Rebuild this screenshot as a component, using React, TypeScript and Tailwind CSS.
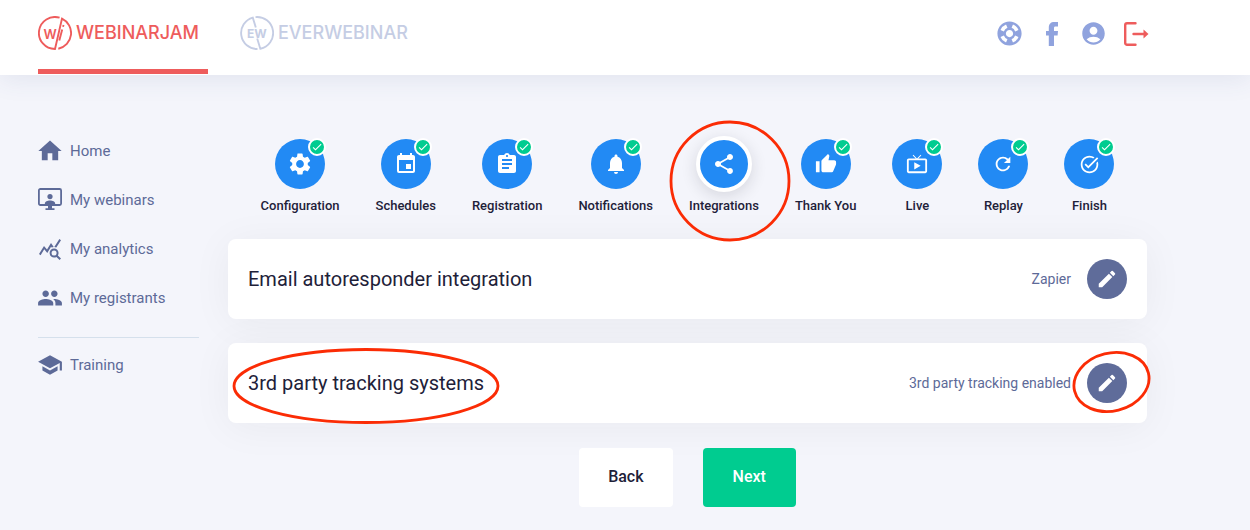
import type { ReactNode } from "react";
import type { IconType } from "react-icons";
import {
  MdAccountCircle,
  MdAssignment,
  MdCheck,
  MdEdit,
  MdEvent,
  MdHome,
  MdLiveTv,
  MdNotifications,
  MdPeople,
  MdQueryStats,
  MdRefresh,
  MdSchool,
  MdSettings,
  MdShare,
  MdSupport,
  MdTaskAlt,
  MdThumbUp,
} from "react-icons/md";

function WebinarJamMark() {
  return (
    <svg viewBox="0 0 34 34" className="size-[34px] shrink-0" fill="none" stroke="currentColor" strokeWidth="1.9" aria-hidden="true">
      <path d="M21.6 1.7A16 16 0 1 0 17 33L24 2.600A16 16 0 0 1 20.300 32.700" />
      <path d="M24.200 13.500L21.300 24.500M25 10.800L25.600 9" />
      <text x="5.500" y="22.500" fontSize="13" fontWeight="600" fontFamily="Inter, sans-serif" fill="currentColor" stroke="none">
        W
      </text>
    </svg>
  );
}

function EverWebinarMark() {
  return (
    <svg viewBox="0 0 34 34" className="size-[34px] shrink-0" fill="none" stroke="currentColor" strokeWidth="1.9" aria-hidden="true">
      <path d="M15.500 1.100A16 16 0 0 1 20.300 32.700L17.200 22.500" />
      <path d="M17.500 33A16 16 0 0 1 12.800 1.600L15.800 11.500" />
      <text x="7" y="21.500" fontSize="12" fontWeight="700" fontFamily="Inter, sans-serif" fill="currentColor" stroke="none">
        EW
      </text>
    </svg>
  );
}

function FacebookIcon() {
  return (
    <svg viewBox="0 0 12 24" className="h-6 w-3" fill="currentColor" aria-hidden="true">
      <path d="M12 0v4.500H9.600C8.300 4.500 8 5.100 8 6.200V9h4l-.4 4.500H8V24H2.800V13.500H0V9h2.800V5.800C2.800 2 4.800 0 8.300 0z" />
    </svg>
  );
}

function LogoutIcon() {
  return (
    <svg viewBox="0 0 26 26" className="size-[26px]" fill="none" stroke="currentColor" strokeWidth="2.400" strokeLinecap="round" aria-hidden="true">
      <path d="M12.500 2.300H4a1.800 1.800 0 0 0-1.800 1.800v17.800A1.800 1.800 0 0 0 4 23.700h8.500" />
      <path d="M10.500 13H21" />
      <path d="M20.500 8.500L25.500 13l-5 4.500z" fill="currentColor" stroke="none" />
    </svg>
  );
}

function WebinarIcon({ className }: { className?: string }) {
  return (
    <svg viewBox="0 0 24 24" className={className} fill="currentColor" aria-hidden="true">
      <rect x="0.900" y="1" width="22.200" height="16" rx="1.500" fill="none" stroke="currentColor" strokeWidth="1.800" />
      <circle cx="12" cy="8.600" r="2.600" />
      <path d="M6.800 17v-1c0-2.400 2.600-3.400 5.200-3.400s5.200 1 5.200 3.400v1z" />
      <path d="M10 17h4v3.200h2.500V22h-9v-1.800H10z" />
    </svg>
  );
}

const nav: { label: string; icon: ReactNode }[] = [
  { label: "Home", icon: <MdHome className="size-7" /> },
  { label: "My webinars", icon: <WebinarIcon className="size-6" /> },
  { label: "My analytics", icon: <MdQueryStats className="size-6" /> },
  { label: "My registrants", icon: <MdPeople className="size-[26px]" /> },
];

const steps: { label: string; icon: IconType; size: string; done: boolean }[] = [
  { label: "Configuration", icon: MdSettings, size: "size-[26px]", done: true },
  { label: "Schedules", icon: MdEvent, size: "size-6", done: true },
  { label: "Registration", icon: MdAssignment, size: "size-6", done: true },
  { label: "Notifications", icon: MdNotifications, size: "size-6", done: true },
  { label: "Integrations", icon: MdShare, size: "size-6", done: false },
  { label: "Thank You", icon: MdThumbUp, size: "size-[22px]", done: true },
  { label: "Live", icon: MdLiveTv, size: "size-[22px]", done: true },
  { label: "Replay", icon: MdRefresh, size: "size-[22px]", done: true },
  { label: "Finish", icon: MdTaskAlt, size: "size-[21px]", done: true },
];

function NavLink({ label, icon }: { label: string; icon: ReactNode }) {
  return (
    <a href="#" className="flex h-6 items-center gap-2">
      <span className="flex w-6 shrink-0 items-center justify-center *:shrink-0">{icon}</span>
      <span className="text-[15px] leading-6">{label}</span>
    </a>
  );
}

function Step({ label, icon: Icon, size, done }: (typeof steps)[number]) {
  return (
    <li className="relative">
      <a href="#" className="flex min-w-[50px] flex-col items-center gap-[7px]">
        {done ? (
          <span className="relative flex size-[50px] items-center justify-center rounded-full bg-[#228af4] text-white">
            <Icon className={size} />
            <span className="absolute -top-px -right-px flex size-[18px] items-center justify-center rounded-full border-2 border-white bg-[#00cc90]">
              <MdCheck className="size-3 shrink-0" />
            </span>
          </span>
        ) : (
          <span className="-m-[3px] flex size-14 items-center justify-center rounded-full border-4 border-white bg-[#228af4] text-white shadow-[0_4px_16px_rgba(30,30,45,0.14)]">
            <Icon className={size} />
          </span>
        )}
        <span className="text-[13px] leading-5 font-medium whitespace-nowrap text-[#1e2139]">{label}</span>
      </a>
      {!done && (
        <svg viewBox="0 0 122 122" className="pointer-events-none absolute -top-[19px] -left-5 z-10 size-[122px]" fill="none" stroke="#fb2c05" strokeWidth="2.800" aria-hidden="true">
          <ellipse cx="61" cy="61" rx="59" ry="59" />
        </svg>
      )}
    </li>
  );
}

function Card({ title, status, marked }: { title: string; status: string; marked?: boolean }) {
  return (
    <section className="flex h-20 items-center justify-between rounded-lg bg-white px-5 shadow-[0_4px_40px_rgba(30,30,45,0.05)]">
      <h2 className="relative text-xl text-[#1e2139]">
        {title}
        {marked && (
          <svg viewBox="0 0 268 76" className="pointer-events-none absolute -top-[21px] -left-4 h-[76px] w-[268px]" fill="none" stroke="#fb2c05" strokeWidth="2.800" aria-hidden="true">
            <ellipse cx="134" cy="38" rx="132" ry="36.500" />
          </svg>
        )}
      </h2>
      <div className="flex items-center gap-4">
        <span className="text-sm">{status}</span>
        <button type="button" aria-label={`Edit ${title}`} className="relative flex size-10 items-center justify-center rounded-full bg-[#5f6c9a] text-white">
          <MdEdit className="size-[22px]" />
          {marked && (
            <svg viewBox="0 0 80 64" className="pointer-events-none absolute -top-[13px] -left-4 h-16 w-20" fill="none" stroke="#fb2c05" strokeWidth="2.800" aria-hidden="true">
              <ellipse cx="40.500" cy="32" rx="38" ry="29" transform="rotate(-14 40.500 32)" />
            </svg>
          )}
        </button>
      </div>
    </section>
  );
}

export default function App() {
  return (
    <div className="min-h-screen bg-[#f4f5fb] [font-family:Roboto,sans-serif] text-[#5d6a98]">
      <header className="relative flex h-[75px] items-start justify-between bg-white pr-[101px] pl-[38px] shadow-[0_4px_24px_rgba(60,80,130,0.1)]">
        <nav className="flex h-[74px] gap-8 [font-family:Inter,sans-serif] text-lg font-medium">
          <a href="#" className="flex w-[170px] items-center gap-1 border-b-[5px] border-[#ee5c5c] pb-[3px] text-[#ee5c5c]">
            <WebinarJamMark />
            WEBINARJAM
          </a>
          <a href="#" className="flex items-center gap-1 pb-2 text-[#c5cde4]">
            <EverWebinarMark />
            EVERWEBINAR
          </a>
        </nav>
        <div className="flex h-[67px] items-center gap-[15px] text-[#90a3de]">
          <a href="#" aria-label="Support" className="flex w-[27px] justify-center">
            <MdSupport className="size-[29px] shrink-0" />
          </a>
          <a href="#" aria-label="Facebook" className="flex w-[27px] justify-center">
            <FacebookIcon />
          </a>
          <a href="#" aria-label="Account" className="flex w-[27px] justify-center">
            <MdAccountCircle className="size-[27px]" />
          </a>
          <a href="#" aria-label="Log out" className="flex w-[27px] justify-center text-[#ee5c5c]">
            <LogoutIcon />
          </a>
        </div>
      </header>

      <div className="flex gap-[29px] pt-16 pr-[103px] pb-6 pl-[38px]">
        <nav className="flex w-[161px] shrink-0 flex-col gap-[25px]">
          {nav.map((item) => (
            <NavLink key={item.label} {...item} />
          ))}
          <div className="mt-0.5 border-t border-[#d5e0ec] pt-[15px]">
            <NavLink label="Training" icon={<MdSchool className="size-[26px]" />} />
          </div>
        </nav>

        <main className="min-w-0 flex-1">
          <ol className="flex justify-center gap-9">
            {steps.map((step) => (
              <Step key={step.label} {...step} />
            ))}
          </ol>
          <div className="mt-[23px] flex flex-col gap-6">
            <Card title="Email autoresponder integration" status="Zapier" />
            <Card title="3rd party tracking systems" status="3rd party tracking enabled" marked />
          </div>
          <div className="relative mt-[25px] flex justify-center gap-[30px] text-base font-medium">
            <button type="button" className="h-[59px] rounded bg-white px-[29px] pb-0.5 text-[#1e2139]">Back</button>
            <button type="button" className="h-[59px] rounded bg-[#00cc90] px-[30px] pb-0.5 text-white">Next</button>
          </div>
        </main>
      </div>
    </div>
  );
}
